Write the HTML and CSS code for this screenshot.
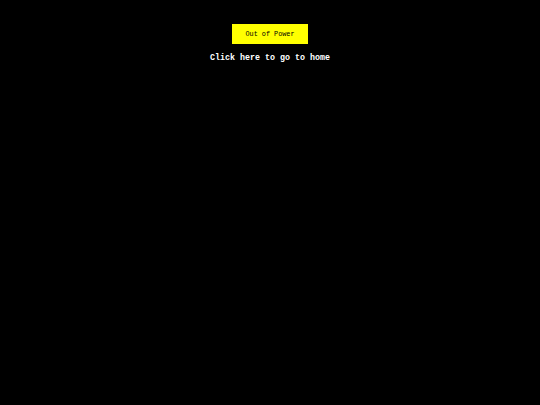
FILE: index.html
```html
<!DOCTYPE html>
<html>
<head>
<meta charset="utf-8">
<link rel="stylesheet" href="styles.css">
</head>
<body>
<div class="page">
  <div class="badge">Out of Power</div>
  <a class="home" href="#">Click here to go to home</a>
</div>
</body>
</html>
```
FILE: styles.css
```css
html, body {
  margin: 0;
  padding: 0;
  background: #000;
  height: 100%;
}
.page {
  display: flex;
  flex-direction: column;
  align-items: center;
  padding-top: 24px;
  font-family: "Liberation Mono", "DejaVu Sans Mono", monospace;
}
.badge {
  width: 76px;
  height: 20px;
  background: #ffff00;
  color: #000;
  font-size: 6.8px;
  display: flex;
  align-items: center;
  justify-content: center;
}
.home {
  margin-top: 9px;
  color: #fff;
  font-weight: bold;
  font-size: 8.33px;
  text-decoration: none;
  line-height: 11px;
}
```
